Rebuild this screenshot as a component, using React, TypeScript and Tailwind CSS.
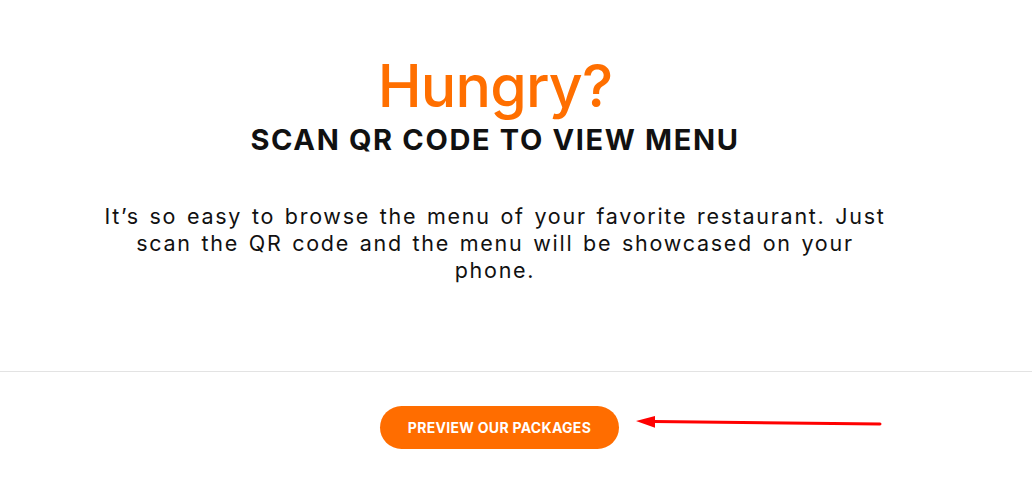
import React from "react";

export default function App() {
  return (
    <div className="w-[1032px] h-[482px] bg-white overflow-hidden" style={{ fontFamily: "Inter, 'Noto Sans', sans-serif" }}>
      <div className="w-[990px] flex flex-col items-center text-center pt-[56px]">
        <h1 className="text-[59px] leading-[59px] font-medium text-[#ff6f00] tracking-[-0.8px]">Hungry?</h1>
        <h2 className="mt-[8px] text-[29px] leading-[34px] font-bold text-[#111] tracking-[1.65px]">SCAN QR CODE TO VIEW MENU</h2>
        <p className="mt-[46px] text-[21.5px] leading-[27px] text-[#111] tracking-[1.72px] [word-spacing:2px] whitespace-nowrap">
          It’s so easy to browse the menu of your favorite restaurant. Just
          <br />
          scan the QR code and the menu will be showcased on your
          <br />
          phone.
        </p>
      </div>
      <div className="mt-[87px] h-px bg-[#e3e3e3] w-full" />
      <div className="relative w-[990px] flex justify-center pt-[34px] pl-[9px]">
        <button className="w-[239px] h-[43px] rounded-full bg-[#ff6d00] text-white text-[14px] font-bold tracking-[0.3px]">
          PREVIEW OUR PACKAGES
        </button>
        <svg className="absolute left-[630px] top-[41px]" width="260" height="20" viewBox="0 0 260 20">
          <path d="M24 8.6 L250 11" stroke="#ff0000" strokeWidth="3" strokeLinecap="round" fill="none" />
          <path d="M6 8 L25 3 L25 14.7 Z" fill="#ff0000" />
        </svg>
      </div>
    </div>
  );
}
